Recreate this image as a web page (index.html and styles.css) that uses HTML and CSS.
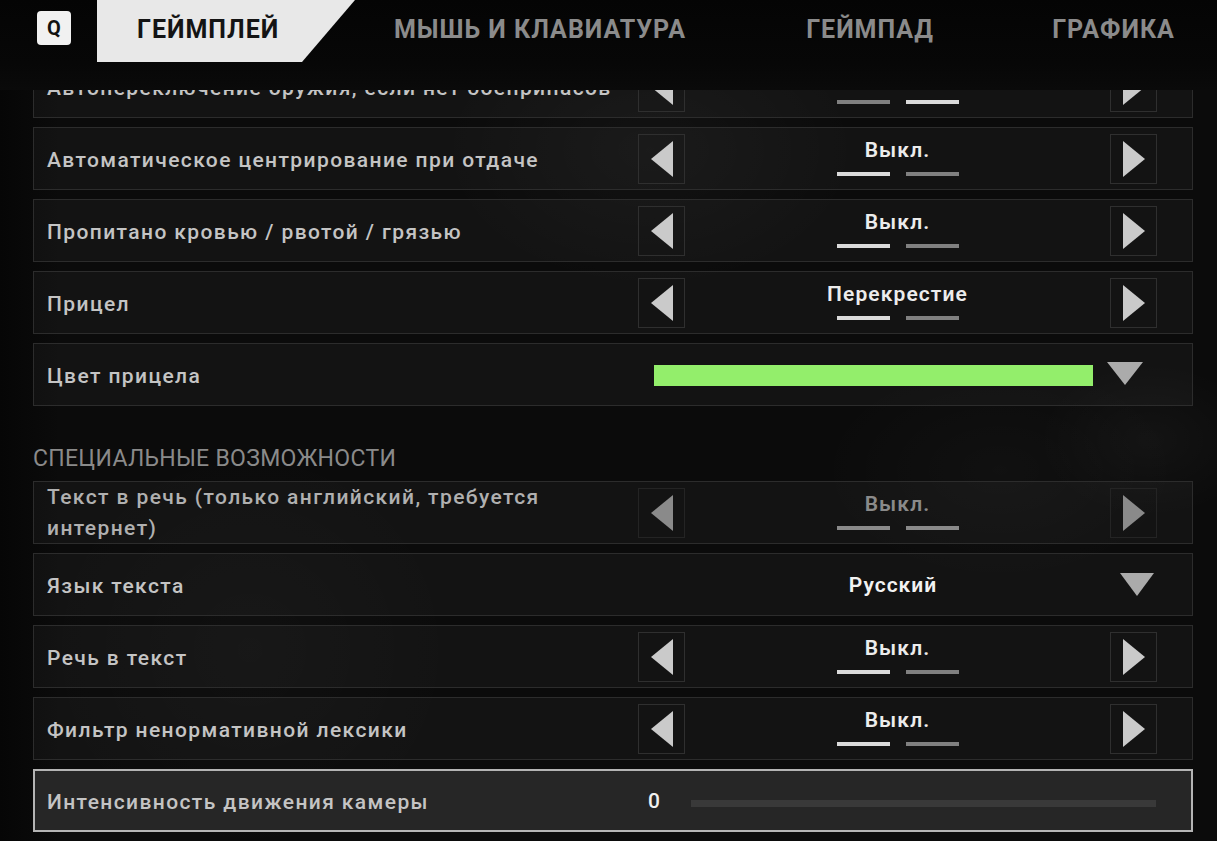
FILE: index.html
```html
<!DOCTYPE html>
<html lang="ru">
<head>
<meta charset="utf-8">
<title>Настройки</title>
<link rel="stylesheet" href="styles.css">
</head>
<body>
<div class="screen">
  <header class="tabs">
    <div class="key">Q</div>
    <div class="tab tab-active"><span>ГЕЙМПЛЕЙ</span></div>
    <div class="tab tab-mouse">МЫШЬ И КЛАВИАТУРА</div>
    <div class="tab tab-pad">ГЕЙМПАД</div>
    <div class="tab tab-gfx">ГРАФИКА</div>
  </header>

  <div class="viewport">
    <div class="list">
      <div class="row">
        <div class="label">Автопереключение оружия, если нет боеприпасов</div>
        <div class="stepper">
          <div class="arrow"><svg width="22" height="36" viewBox="0 0 22 36"><polygon points="22,0 22,36 0,18"/></svg></div>
          <div class="value"><span>Вкл.</span><div class="bars"><i></i><i class="on"></i></div></div>
          <div class="arrow"><svg width="22" height="36" viewBox="0 0 22 36"><polygon points="0,0 22,18 0,36"/></svg></div>
        </div>
      </div>

      <div class="row">
        <div class="label">Автоматическое центрирование при отдаче</div>
        <div class="stepper">
          <div class="arrow"><svg width="22" height="36" viewBox="0 0 22 36"><polygon points="22,0 22,36 0,18"/></svg></div>
          <div class="value"><span>Выкл.</span><div class="bars"><i class="on"></i><i></i></div></div>
          <div class="arrow"><svg width="22" height="36" viewBox="0 0 22 36"><polygon points="0,0 22,18 0,36"/></svg></div>
        </div>
      </div>

      <div class="row">
        <div class="label">Пропитано кровью / рвотой / грязью</div>
        <div class="stepper">
          <div class="arrow"><svg width="22" height="36" viewBox="0 0 22 36"><polygon points="22,0 22,36 0,18"/></svg></div>
          <div class="value"><span>Выкл.</span><div class="bars"><i class="on"></i><i></i></div></div>
          <div class="arrow"><svg width="22" height="36" viewBox="0 0 22 36"><polygon points="0,0 22,18 0,36"/></svg></div>
        </div>
      </div>

      <div class="row">
        <div class="label">Прицел</div>
        <div class="stepper">
          <div class="arrow"><svg width="22" height="36" viewBox="0 0 22 36"><polygon points="22,0 22,36 0,18"/></svg></div>
          <div class="value"><span>Перекрестие</span><div class="bars"><i class="on"></i><i></i></div></div>
          <div class="arrow"><svg width="22" height="36" viewBox="0 0 22 36"><polygon points="0,0 22,18 0,36"/></svg></div>
        </div>
      </div>

      <div class="row">
        <div class="label">Цвет прицела</div>
        <div class="color-pick">
          <div class="swatch"></div>
          <svg class="drop" width="36" height="23" viewBox="0 0 36 23"><polygon points="0,0 36,0 18,23"/></svg>
        </div>
      </div>

      <div class="section">СПЕЦИАЛЬНЫЕ ВОЗМОЖНОСТИ</div>

      <div class="row row-disabled">
        <div class="label label-wrap">Текст в речь (только английский, требуется интернет)</div>
        <div class="stepper">
          <div class="arrow"><svg width="22" height="36" viewBox="0 0 22 36"><polygon points="22,0 22,36 0,18"/></svg></div>
          <div class="value"><span>Выкл.</span><div class="bars"><i class="on"></i><i></i></div></div>
          <div class="arrow"><svg width="22" height="36" viewBox="0 0 22 36"><polygon points="0,0 22,18 0,36"/></svg></div>
        </div>
      </div>

      <div class="row">
        <div class="label">Язык текста</div>
        <div class="dropdown">
          <div class="dd-value">Русский</div>
          <svg class="drop" width="34" height="23" viewBox="0 0 34 23"><polygon points="0,0 34,0 17,23"/></svg>
        </div>
      </div>

      <div class="row">
        <div class="label">Речь в текст</div>
        <div class="stepper">
          <div class="arrow"><svg width="22" height="36" viewBox="0 0 22 36"><polygon points="22,0 22,36 0,18"/></svg></div>
          <div class="value"><span>Выкл.</span><div class="bars"><i class="on"></i><i></i></div></div>
          <div class="arrow"><svg width="22" height="36" viewBox="0 0 22 36"><polygon points="0,0 22,18 0,36"/></svg></div>
        </div>
      </div>

      <div class="row">
        <div class="label">Фильтр ненормативной лексики</div>
        <div class="stepper">
          <div class="arrow"><svg width="22" height="36" viewBox="0 0 22 36"><polygon points="22,0 22,36 0,18"/></svg></div>
          <div class="value"><span>Выкл.</span><div class="bars"><i class="on"></i><i></i></div></div>
          <div class="arrow"><svg width="22" height="36" viewBox="0 0 22 36"><polygon points="0,0 22,18 0,36"/></svg></div>
        </div>
      </div>

      <div class="row row-selected">
        <div class="label">Интенсивность движения камеры</div>
        <div class="slider">
          <div class="slider-num">0</div>
          <div class="track"></div>
        </div>
      </div>
    </div>
  </div>
</div>
</body>
</html>
```

FILE: styles.css
```css
* { box-sizing: border-box; }

html, body {
  margin: 0;
  padding: 0;
  height: 100%;
}

body {
  background-color: #0b0b0b;
  background-image:
    radial-gradient(ellipse 160px 110px at 1150px 440px, rgba(255,255,255,0.035), transparent 70%),
    radial-gradient(ellipse 260px 160px at 1000px 470px, rgba(255,255,255,0.025), transparent 70%),
    radial-gradient(ellipse 300px 200px at 650px 150px, rgba(255,255,255,0.03), transparent 70%),
    radial-gradient(ellipse 300px 300px at 250px 650px, rgba(255,255,255,0.02), transparent 70%),
    linear-gradient(90deg, #060606 0px, transparent 60px);
  font-family: Roboto, "Noto Sans", "DejaVu Sans", sans-serif;
  overflow: hidden;
}

.screen {
  width: 1217px;
  height: 841px;
  display: flex;
  flex-direction: column;
}

/* ---------- tabs ---------- */
.tabs {
  height: 90px;
  flex: none;
  display: flex;
  align-items: flex-start;
  background: linear-gradient(180deg, #040404 0%, #070707 70%, #0a0a0a 100%);
  position: relative;
  z-index: 2;
}

.key {
  margin: 11px 26px 0 37px;
  width: 34px;
  height: 34px;
  border-radius: 4px;
  background: #f1f1f1;
  color: #111;
  font-weight: 700;
  font-size: 20px;
  display: flex;
  align-items: center;
  justify-content: center;
}

.tab {
  height: 62px;
  display: flex;
  align-items: center;
  justify-content: center;
  font-size: 25px;
  font-weight: 700;
  letter-spacing: 1px;
  color: #8b8b8b;
  padding-bottom: 4px;
}

.tab-active {
  width: 258px;
  background: #e8e8e8;
  clip-path: polygon(0 0, 100% 0, 205px 100%, 0 100%);
  color: #141414;
  justify-content: flex-start;
  padding-left: 40px;
}

.tab-mouse { width: 370px; }
.tab-pad { width: 290px; }
.tab-gfx { width: 197px; }

/* ---------- list ---------- */
.viewport {
  flex: 1;
  overflow: hidden;
}

.list {
  margin-top: -35px;
  padding: 0 24px 0 33px;
  display: flex;
  flex-direction: column;
  gap: 9px;
}

.row {
  height: 63px;
  display: flex;
  align-items: center;
  border: 1px solid #2c2c2c;
  background: rgba(255,255,255,0.035);
  padding-left: 13px;
}

.label {
  flex: 1;
  min-width: 0;
  color: #c4c4c4;
  font-size: 21px;
  font-weight: 500;
  letter-spacing: 1.4px;
  white-space: nowrap;
  padding-top: 2px;
}

.label-wrap {
  white-space: normal;
  line-height: 31px;
  padding-right: 30px;
  padding-top: 0;
}

/* stepper */
.stepper {
  width: 519px;
  margin-right: 35px;
  display: flex;
  align-items: center;
}

.arrow {
  width: 47px;
  height: 50px;
  border: 1px solid #2f2f2f;
  display: flex;
  align-items: center;
  justify-content: center;
  flex: none;
}

.arrow svg { fill: #cacaca; display: block; }

.value {
  flex: 1;
  display: flex;
  flex-direction: column;
  align-items: center;
  padding-bottom: 4px;
}

.value span {
  color: #ececec;
  font-size: 21px;
  font-weight: 600;
  letter-spacing: 1.1px;
  line-height: 26px;
}

.bars {
  display: flex;
  gap: 16px;
  margin-top: 9px;
}

.bars i {
  display: block;
  width: 53px;
  height: 4px;
  background: #808080;
}

.bars i.on { background: #dadada; }

/* disabled row */
.row-disabled .label { color: #b0b0b0; }
.row-disabled .arrow { border-color: #242424; }
.row-disabled .arrow svg { fill: #8a8a8a; }
.row-disabled .value span { color: #8a8a8a; }
.row-disabled .bars i,
.row-disabled .bars i.on { background: #8a8a8a; }

/* colour */
.color-pick {
  width: 555px;
  display: flex;
  align-items: center;
  padding-left: 17px;
}

.swatch {
  width: 439px;
  height: 21px;
  background: #93ee6b;
  margin-top: 2px;
}

.drop { fill: #ababab; display: block; }
.color-pick .drop { margin-left: 14px; margin-top: -2px; }

/* dropdown */
.dropdown {
  width: 555px;
  display: flex;
  align-items: center;
  padding-left: 47px;
}

.dd-value {
  flex: 1;
  text-align: center;
  color: #f2f2f2;
  font-size: 21px;
  font-weight: 600;
  letter-spacing: 1px;
  padding-right: 8px;
}

.dropdown .drop { margin-right: 38px; margin-left: 10px; }

/* section */
.section {
  height: 57px;
  display: flex;
  align-items: flex-end;
  color: #8a8a8a;
  font-size: 23px;
  font-weight: 400;
  letter-spacing: 0.3px;
  padding-bottom: 0;
}

/* selected slider row */
.row-selected {
  background: #262626;
  border: 2px solid #b4b4b4;
  padding-left: 12px;
}

.slider {
  width: 555px;
  display: flex;
  align-items: center;
  padding-right: 35px;
}

.slider-num {
  width: 55px;
  padding-left: 12px;
  color: #f0f0f0;
  font-size: 21px;
  font-weight: 500;
}

.track {
  flex: 1;
  height: 7px;
  background: #393939;
  margin-top: 6px;
}
```
